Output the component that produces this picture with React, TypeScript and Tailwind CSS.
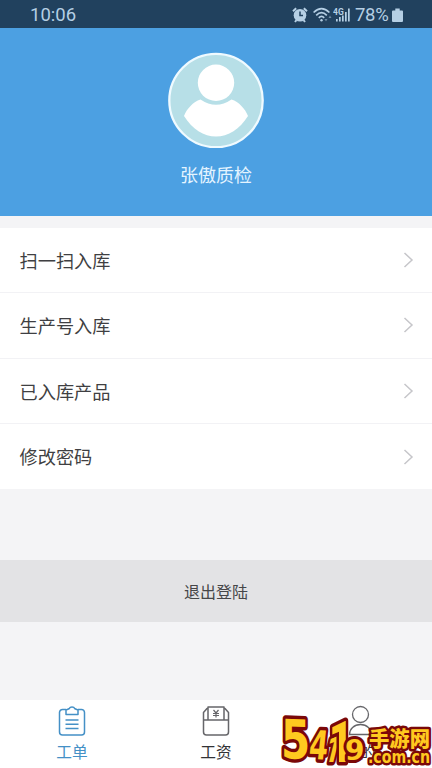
import React from "react";

const menuItems = ["扫一扫入库", "生产号入库", "已入库产品", "修改密码"];

const StatusBar = () => {
  return (
    <div className="flex h-7 shrink-0 items-center justify-between bg-[#21415e] pl-[30px] pr-[29px] pt-0.5 text-[#b5cfe4]">
      <span className="font-['Roboto',sans-serif] text-[18.5px] leading-none">10:06</span>
      <div className="flex items-center">
        <svg className="h-4 w-4" viewBox="0 0 16 16" fill="none">
          <path d="M1 4.2 4.2 1.2M15 4.2l-3.200-3M3 15l1.500-2M13 15l-1.500-2" stroke="currentColor" strokeWidth="2" />
          <circle cx="8" cy="8.300" r="6.300" fill="currentColor" />
          <path d="M8 4.600v4h3" stroke="#21415e" strokeWidth="1.500" />
        </svg>
        <svg className="ml-[5px] h-4 w-5" viewBox="0 0 20 16" fill="none" stroke="currentColor" strokeWidth="1.700">
          <path d="M.6 5.500Q8.500 -2.200 16.400 5.500M3.200 8.300Q8.500 3 13.800 8.300M5.800 10.900Q8.500 8 11.200 10.900" />
          <circle cx="8.500" cy="13.300" r="1.200" fill="currentColor" stroke="none" />
          <path d="m11.500 12 1.500 2.500 1.500-2.500zM15.500 11l1.500-2.500 1.500 2.500z" fill="currentColor" stroke="none" opacity=".5" />
        </svg>
        <svg className="h-4 w-[18px]" viewBox="0 0 18 16" fill="currentColor">
          <text x="0" y="7.500" fontSize="8.500" fontWeight="700" fontFamily="Roboto, sans-serif">4G</text>
          <path d="M3 12h1.700v2.500H3zM6 10h1.700v4.500H6zM9 8.500h1.700v6H9zM12 5h1.700v9.500H12zM15 1.500h1.700v13H15z" />
        </svg>
        <span className="ml-1 w-[35px] whitespace-nowrap font-['Roboto',sans-serif] text-[18.5px] leading-none tracking-[-0.3px]">78%</span>
        <svg className="ml-0.5 h-4 w-[11px]" viewBox="0 0 11 16" fill="currentColor">
          <path d="M3.300 1.500h4.400v2H10a1 1 0 0 1 1 1v9.500a1 1 0 0 1-1 1H1a1 1 0 0 1-1-1V4.500a1 1 0 0 1 1-1h2.300z" />
        </svg>
      </div>
    </div>
  );
};

const Avatar = () => {
  return (
    <svg className="h-24 w-24" viewBox="0 0 96 96">
      <circle cx="48" cy="48.500" r="46.700" fill="#b7dfe7" stroke="#effaff" strokeWidth="2.300" />
      <circle cx="48" cy="30.800" r="18.200" fill="white" />
      <path d="M32.500 47.500Q48 58 63.500 47.500C71 50 77 56.500 80 64 72 77 60 84.500 48 84.500S24 77 16 64C19 56.500 25 50 32.500 47.500Z" fill="white" />
    </svg>
  );
};

const MenuRow = ({ label }: { label: string }) => {
  return (
    <div className="flex h-[65.300px] items-center justify-between border-b border-[#f2f2f5] bg-white pl-[19.500px] pr-[18px] last:border-b-0">
      <span className="text-[18.2px] leading-none text-[#3f3f42]">{label}</span>
      <svg className="h-[18px] w-3" viewBox="0 0 12 18" fill="none">
        <path d="m2.500 2 7.500 7-7.500 7" stroke="#c6c6ca" strokeWidth="1.500" />
      </svg>
    </div>
  );
};

const OrderIcon = () => {
  return (
    <svg className="h-8 w-8" viewBox="0 0 32 32" fill="none" stroke="currentColor" strokeWidth="1.500" strokeLinejoin="round">
      <path d="M10 4.500H6.500a3 3 0 0 0-3 3V27a3 3 0 0 0 3 3h19a3 3 0 0 0 3-3V7.500a3 3 0 0 0-3-3H22" />
      <path d="M10 9.500V5l3-1.200Q14 2 16 2t3 1.800L22 5v4.500z" />
      <path d="M9.500 15h13M9.500 19.300h13M9.500 23.500h13" />
    </svg>
  );
};

const WageIcon = () => {
  return (
    <svg className="h-8 w-8" viewBox="0 0 32 32" fill="none" stroke="currentColor" strokeWidth="1.500" strokeLinejoin="round">
      <path d="M8 3.500H7L3.500 7.500V27a3 3 0 0 0 3 3h19a3 3 0 0 0 3-3V7.500L25 3.500h-1" />
      <path d="M3.500 15h25M8 15V2h16v13" />
      <path d="m13.500 5 2.500 3 2.500-3M13 8.500h6M13 10.500h6M16 8v4.500" strokeWidth="1.200" />
    </svg>
  );
};

const MineIcon = () => {
  return (
    <svg className="h-8 w-8" viewBox="0 0 32 32" fill="none" stroke="currentColor" strokeWidth="1.300">
      <circle cx="16.500" cy="9.500" r="8" />
      <path d="M5.500 29.500c0-5.500 4.500-10 11-10s11 4.500 11 10z" />
    </svg>
  );
};

const Tab = ({ label, active, children }: { label: string; active?: boolean; children: React.ReactNode }) => {
  return (
    <div className={`flex flex-1 flex-col items-center pt-[5px] ${active ? "text-[#4490c6]" : "text-[#66666a]"}`}>
      {children}
      <span className={`mt-[7px] text-[15.700px] leading-none ${active ? "" : "text-[#333336]"}`}>{label}</span>
    </div>
  );
};

const SiteLogo = () => {
  return (
    <svg
      className="absolute bottom-0 right-0 h-14 w-[152px] overflow-visible"
      viewBox="0 0 152 56"
      fill="#ffc91f"
      stroke="#7b0808"
      strokeLinejoin="round"
      paintOrder="stroke"
      fontFamily="'DejaVu Sans', sans-serif"
      fontWeight="700"
    >
      <text transform="translate(1 46) skewY(2) scale(.78 1)" fontSize="54" strokeWidth="7">5</text>
      <text transform="translate(28 47) skewY(2) skewX(-6) scale(.68 1)" fontSize="40" strokeWidth="7">4</text>
      <g fontFamily="Roboto, sans-serif" fontWeight="900">
        <text transform="translate(43 50) skewX(-14) scale(.66 1)" fontSize="38" strokeWidth="7">1</text>
        <text transform="translate(49 50) scale(.72 1)" fontSize="57" strokeWidth="7">1</text>
      </g>
      <text transform="translate(65 48) skewY(-2)" fontSize="28" strokeWidth="6">9</text>
      <text
        x="89"
        y="33.500"
        fontSize="21"
        fontWeight="900"
        fontFamily="'Noto Sans CJK SC', sans-serif"
        strokeWidth="5"
        textLength="61"
        lengthAdjust="spacingAndGlyphs"
      >
        手游网
      </text>
      <text x="88" y="50.500" fontSize="18" strokeWidth="5" textLength="62" lengthAdjust="spacingAndGlyphs">.com.cn</text>
    </svg>
  );
};

export default function App() {
  return (
    <div className="relative flex h-[768px] w-[432px] flex-col overflow-hidden bg-[#f4f4f6] font-['Noto_Sans_CJK_SC',sans-serif]">
      <StatusBar />
      <div className="flex h-[188px] shrink-0 flex-col items-center bg-[#4ca0e2] pt-6">
        <Avatar />
        <span className="mt-[17px] text-[18px] leading-none text-[#e4f4ff]">张傲质检</span>
      </div>
      <div className="mt-3 h-[260.500px] shrink-0">
        {menuItems.map((label) => (
          <MenuRow key={label} label={label} />
        ))}
      </div>
      <button className="mt-[71.500px] h-[62px] shrink-0 bg-[#e3e3e5] text-[16px] text-[#464648]">退出登陆</button>
      <div className="mt-auto flex h-[68px] shrink-0 bg-white">
        <Tab label="工单" active>
          <OrderIcon />
        </Tab>
        <Tab label="工资">
          <WageIcon />
        </Tab>
        <Tab label="我的">
          <MineIcon />
        </Tab>
      </div>
      <SiteLogo />
    </div>
  );
}
